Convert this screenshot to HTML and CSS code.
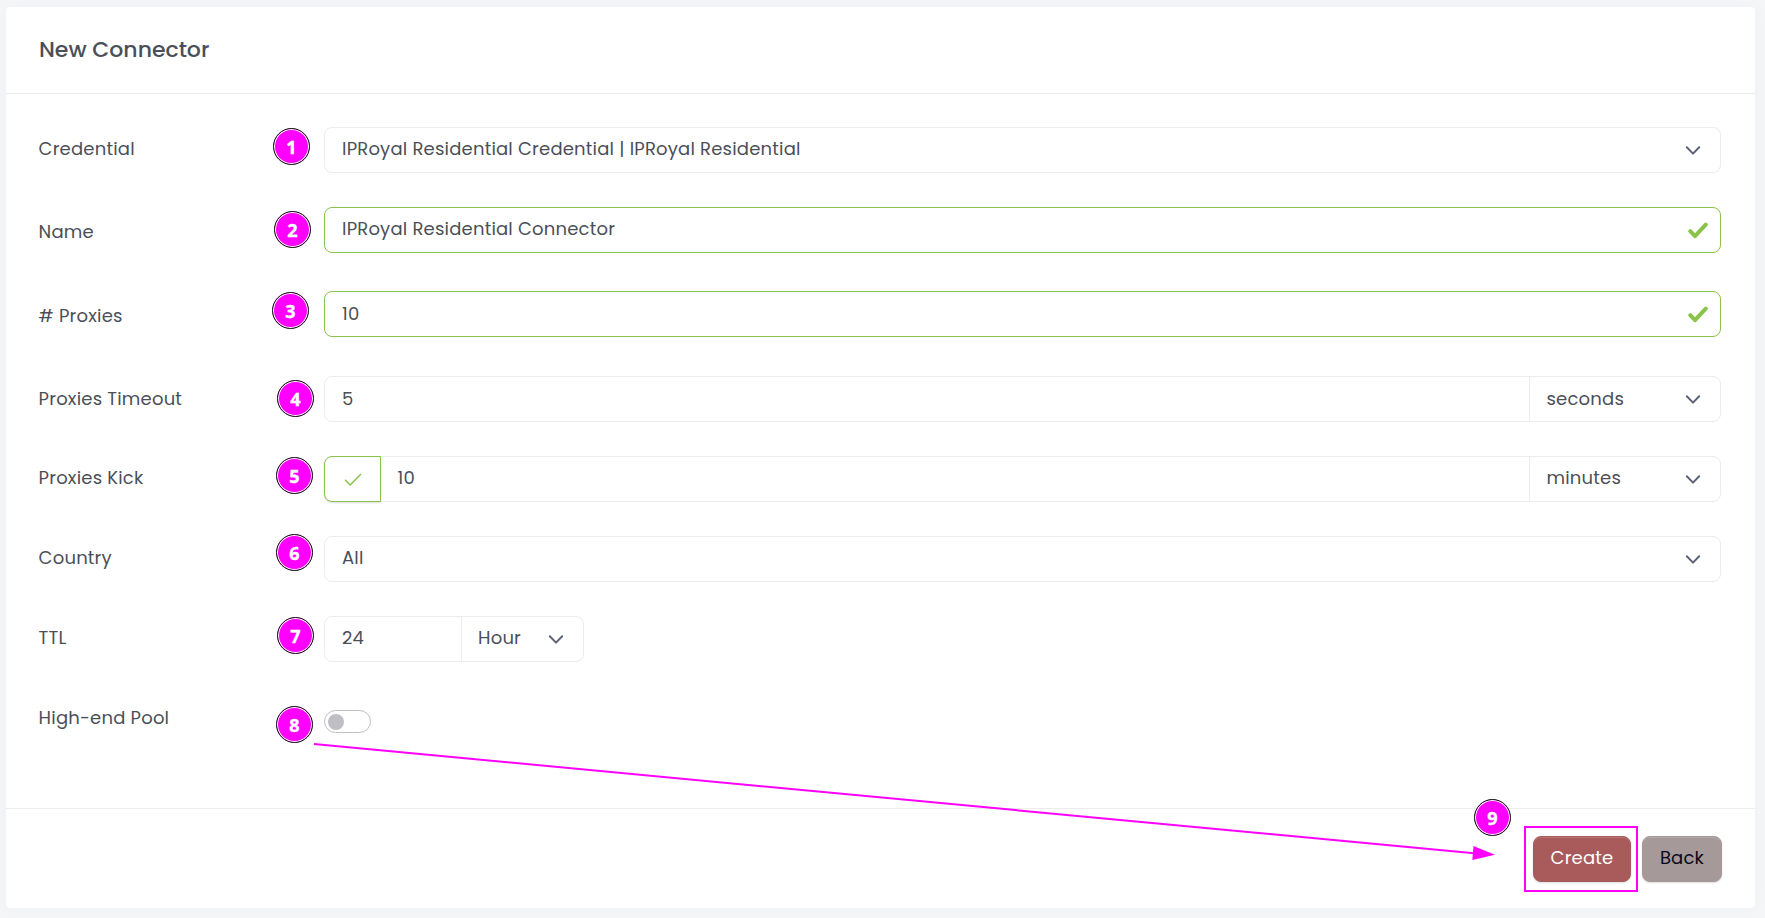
FILE: index.html
```
<!DOCTYPE html>
<html lang="en">
<head>
<meta charset="utf-8">
<title>New Connector</title>
<link rel="stylesheet" href="styles.css">
</head>
<body>
<svg class="defs" aria-hidden="true">
  <symbol id="chevron" viewBox="0 0 16 12"><path d="M1.8 2.2 8 8.6l6.2-6.4" fill="none" stroke="#5e6278" stroke-width="2" stroke-linecap="round" stroke-linejoin="round"/></symbol>
  <symbol id="valid" viewBox="0 0 20 17"><path d="M2.3 9.2 7 14.2 17.8 2.6" fill="none" stroke="#8bc34a" stroke-width="4" stroke-linecap="round" stroke-linejoin="round"/></symbol>
</svg>
<main class="card">
  <header class="card-header"><h1 class="title">New Connector</h1></header>
  <form class="card-body">
    <div class="row">
      <label class="label">Credential</label>
      <div class="control"><span class="value">IPRoyal Residential Credential | IPRoyal Residential</span><svg class="chevron"><use href="#chevron"/></svg></div>
    </div>
    <div class="row row-tall">
      <label class="label label-low">Name</label>
      <div class="control is-valid"><span class="value">IPRoyal Residential Connector</span><svg class="valid"><use href="#valid"/></svg></div>
    </div>
    <div class="row row-tall">
      <label class="label label-low">#&nbsp;Proxies</label>
      <div class="control is-valid"><span class="value value-low">10</span><svg class="valid"><use href="#valid"/></svg></div>
    </div>
    <div class="row">
      <label class="label value-low">Proxies Timeout</label>
      <div class="control"><span class="value value-low">5</span><div class="unit"><span class="value-low">seconds</span><svg class="chevron"><use href="#chevron"/></svg></div></div>
    </div>
    <div class="row">
      <label class="label">Proxies Kick</label>
      <div class="control"><span class="toggle"><svg class="tick" viewBox="0 0 18 13"><path d="M1 6.8 6.2 12 17 1" fill="none" stroke="#8bc34a" stroke-width="1.5"/></svg></span><span class="value">10</span><div class="unit"><span>minutes</span><svg class="chevron"><use href="#chevron"/></svg></div></div>
    </div>
    <div class="row">
      <label class="label">Country</label>
      <div class="control"><span class="value">All</span><svg class="chevron"><use href="#chevron"/></svg></div>
    </div>
    <div class="row">
      <label class="label">TTL</label>
      <div class="control control-small"><span class="value">24</span><div class="unit unit-small"><span>Hour</span><svg class="chevron"><use href="#chevron"/></svg></div></div>
    </div>
    <div class="row">
      <label class="label">High-end Pool</label>
      <div class="switch-cell"><span class="switch"><span class="knob"></span></span></div>
    </div>
  </form>
  <footer class="card-footer">
    <button class="btn btn-primary" type="button">Create</button>
    <button class="btn btn-secondary" type="button">Back</button>
  </footer>
</main>

<!-- Walkthrough annotations laid over the form -->
<svg class="arrow" width="1765" height="918" viewBox="0 0 1765 918">
  <path d="M314 744 1474 853.3" stroke="#f0f" stroke-width="2" fill="none"/>
  <path d="M1473.5 846 1495 854.7 1472.3 860Z" fill="#f0f"/>
</svg>
<div class="highlight"></div>
<span class="step s1">1</span>
<span class="step s2">2</span>
<span class="step s3">3</span>
<span class="step s4">4</span>
<span class="step s5">5</span>
<span class="step s6">6</span>
<span class="step s7">7</span>
<span class="step s8">8</span>
<span class="step s9">9</span>
</body>
</html>
```
FILE: styles.css
```
* { box-sizing: border-box; }

body {
  margin: 0;
  height: 918px;
  padding: 7px 10px 10px 6px;
  overflow: hidden;
  background: #f5f6f8;
  color: #4b4f58;
  font: 400 18px/27px Poppins, Inter, sans-serif;
  letter-spacing: 0.2px;
}

.defs { position: absolute; width: 0; height: 0; }

.card {
  display: flex;
  flex-direction: column;
  height: 901px;
  background: #fff;
  border-radius: 4px;
  box-shadow: 0 0 20px rgba(60, 65, 90, 0.03);
}

.card-header {
  display: flex;
  align-items: center;
  height: 87px;
  padding: 0 32px 0 33px;
  border-bottom: 1px solid #ebebef;
}

.title {
  margin: 0;
  font-size: 22px;
  font-weight: 500;
  line-height: 30px;
  letter-spacing: 0;
}

.card-body { flex: 1; padding: 33px 34px 0 32px; }

.row {
  display: grid;
  grid-template-columns: 286px 1fr;
  height: 46px;
  margin-bottom: 34px;
}

.row-tall { margin-bottom: 38px; }
.row-tall + .row-tall { margin-bottom: 39px; }

.label { padding: 8px 0 0 0.6px; }
.label.value-low { padding-top: 9px; }
.label-low { padding-top: 11px; }

.control {
  display: flex;
  align-items: center;
  height: 46px;
  border: 1px solid #ebebf0;
  border-radius: 8px;
}

.control-small { width: 260px; }
.control.is-valid { border-color: #8bc34a; }

.value { flex: 1; padding: 0 17px 3px; }
.value.value-low { padding-bottom: 1px; }

.chevron { width: 16px; height: 12px; margin: 2px 19px 0 0; }
.valid { width: 20px; height: 17px; margin-right: 12.5px; }

.unit {
  display: flex;
  align-items: center;
  justify-content: space-between;
  width: 191px;
  height: 44px;
  padding-left: 16.5px;
  border-left: 1px solid #ebebf0;
}

.unit span { padding-bottom: 3px; }
.unit .value-low { padding-bottom: 1px; }
.unit-small { width: 122px; padding-left: 16px; }

.toggle {
  display: flex;
  align-items: center;
  justify-content: center;
  width: 57px;
  height: 46px;
  margin: -1px 0 -1px -1px;
  border: 1px solid #8bc34a;
  border-radius: 8px 0 0 8px;
  box-shadow: 0 1px 2px rgba(0, 0, 0, 0.14);
}

.toggle + .value { padding-left: 16.5px; }
.tick { width: 18px; height: 13px; }

.switch-cell { padding-top: 14px; }

.switch {
  display: flex;
  align-items: center;
  width: 47px;
  height: 23px;
  padding-left: 3px;
  border: 1px solid #bfbfc4;
  border-radius: 12px;
}

.knob { width: 16px; height: 16px; border-radius: 50%; background: #bfbec4; }

.card-footer {
  display: flex;
  justify-content: flex-end;
  gap: 11px;
  height: 100px;
  padding: 27px 33px 0 0;
  border-top: 1px solid #ebebf0;
}

.btn {
  height: 46px;
  padding: 0 0 3px;
  border: 1px solid;
  border-radius: 8px;
  font: inherit;
  letter-spacing: inherit;
  box-shadow: inset 0 1px 0 rgba(255, 255, 255, 0.15), 0 1px 2px rgba(0, 0, 0, 0.14);
}

.btn-primary { width: 98px; background: #a95b5b; border-color: #a95b5b; color: #fff; }
.btn-secondary { width: 80px; background: #a69999; border-color: #a69999; color: #08081a; }

.arrow { position: absolute; left: 0; top: 0; }

.highlight {
  position: absolute;
  left: 1524px;
  top: 826px;
  width: 114px;
  height: 66px;
  border: 2px solid #f0f;
}

.step {
  position: absolute;
  width: 37px;
  height: 37px;
  padding-left: 1px;
  border: 1px solid #111;
  border-radius: 50%;
  background: #f0f;
  box-shadow: inset 0 0 0 1px #fff;
  color: #fff;
  font: 700 18px/36px "Noto Sans", "Open Sans", sans-serif;
  -webkit-text-stroke: 0.4px #fff;
  letter-spacing: 0;
  text-align: center;
}

.s1 { left: 272.5px; top: 127.5px; }
.s2 { left: 273.5px; top: 210.5px; }
.s3 { left: 271.5px; top: 291.5px; }
.s4 { left: 276.5px; top: 379.5px; }
.s5 { left: 275.5px; top: 456.5px; }
.s6 { left: 275.5px; top: 533.5px; }
.s7 { left: 276.5px; top: 616.5px; }
.s8 { left: 275.5px; top: 705.5px; }
.s9 { left: 1473.5px; top: 798.5px; }
```
